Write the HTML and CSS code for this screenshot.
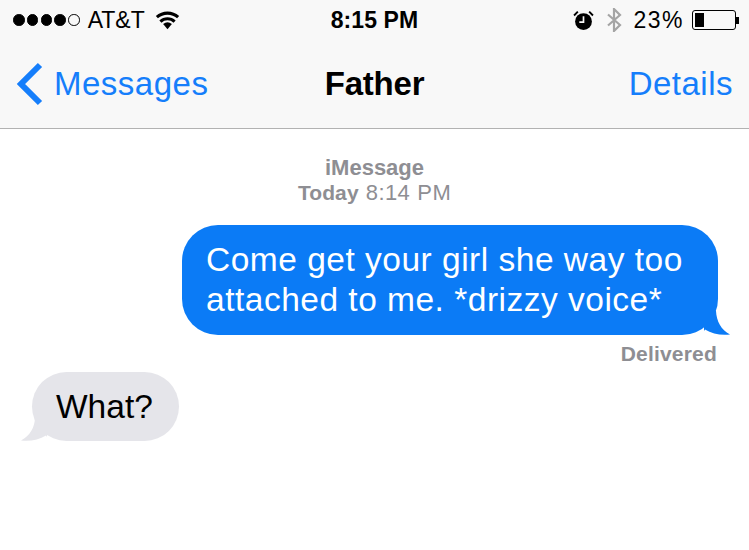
FILE: index.html
```html
<!DOCTYPE html>
<html lang="en">
<head>
<meta charset="utf-8">
<title>Messages</title>
<link rel="stylesheet" href="styles.css">
</head>
<body>
<header class="top">
  <div class="status">
    <div class="status-left">
      <span class="signal"><i class="dot"></i><i class="dot"></i><i class="dot"></i><i class="dot"></i><i class="dot empty"></i></span>
      <span class="carrier">AT&amp;T</span>
      <svg class="wifi" width="25" height="19" viewBox="0 0 24 18"><path d="M12 17.500 7.800 12.400a6.500 6.500 0 0 1 8.400 0Z" fill="#000"/><path d="M5.200 10a10 10 0 0 1 13.600 0M1.800 5.800a15.200 15.200 0 0 1 20.400 0" fill="none" stroke="#000" stroke-width="3"/></svg>
    </div>
    <div class="clock">8:15 PM</div>
    <div class="status-right">
      <svg class="alarm" width="21" height="21" viewBox="0 0 20 20"><circle cx="10" cy="11" r="8" fill="#000"/><path d="M10 6v5.500H6" fill="none" stroke="#f8f8f8" stroke-width="1.600"/><path d="M1 5.200 4.600 1.600M19 5.200l-3.600-3.600" stroke="#000" stroke-width="1.800" fill="none"/></svg>
      <svg class="bt" width="16" height="24" viewBox="0 0 16 24"><path d="M2 6.500 14 17l-6 6V1l6 6L2 17.500" fill="none" stroke="#a4a4a4" stroke-width="2.200"/></svg>
      <span class="pct">23%</span>
      <span class="battery"><span class="battery-fill"></span></span><span class="battery-tip"></span>
    </div>
  </div>
  <nav class="nav">
    <a class="back">
      <svg width="28" height="44" viewBox="0 0 28 44"><path d="M25 3 6 22l19 19" fill="none" stroke="#157efb" stroke-width="6"/></svg>
      <span>Messages</span>
    </a>
    <h1 class="title">Father</h1>
    <a class="details">Details</a>
  </nav>
</header>
<main class="thread">
  <div class="stamp">
    <div class="stamp-service">iMessage</div>
    <div><b class="stamp-day">Today</b> 8:14 PM</div>
  </div>
  <div class="bubble-row out">
    <div class="bubble blue">Come get your girl she way too<br>attached to me. *drizzy voice*
      <svg class="tail tail-out" width="26" height="24" viewBox="0 0 26 24"><path d="M0 0H12C12.500 10 17 19 26 23.500 17 24.500 8 23 1 18.500L0 20Z" fill="#0b7bf6"/></svg>
    </div>
  </div>
  <div class="delivered">Delivered</div>
  <div class="bubble-row in">
    <div class="bubble grey">What?
      <svg class="tail tail-in" width="26" height="24" viewBox="0 0 26 24"><path d="M26 0H14C14 10 9 19 0 23.500 9 24.500 18 23 25 18.500L26 20Z" fill="#e5e5ea"/></svg>
    </div>
  </div>
</main>
</body>
</html>
```
FILE: styles.css
```css
* { box-sizing: border-box; }
html, body { margin: 0; height: 100%; }
body {
  width: 749px;
  height: 550px;
  overflow: hidden;
  background: #fff;
  font-family: "Liberation Sans", Arial, sans-serif;
  color: #000;
}
.top {
  height: 129px;
  background: #f8f8f8;
  border-bottom: 1px solid #b2b2b2;
}
.status {
  height: 40px;
  display: grid;
  grid-template-columns: 1fr auto 1fr;
  align-items: center;
  padding: 0 10px 0 13px;
  font-size: 23px;
}
.status-left { display: flex; align-items: center; }
.signal { display: flex; gap: 2.300px; margin-right: 8px; }
.dot { width: 11.500px; height: 11.500px; border-radius: 50%; background: #000; border: 1px solid #000; }
.dot.empty { background: transparent; }
.carrier { margin-right: 10px; }
.clock { font-weight: 700; font-size: 23px; letter-spacing: 0.100px; margin-right: 3px; }
.status-right { display: flex; align-items: center; justify-content: flex-end; }
.alarm { margin-right: 12px; }
.bt { margin-right: 11px; }
.pct { margin-right: 8px; letter-spacing: 1.500px; }
.battery {
  width: 44px; height: 20px; padding: 2px;
  border: 1px solid #000; border-radius: 3px;
  display: block;
}
.battery-fill { display: block; width: 9px; height: 100%; background: #000; }
.battery-tip { width: 3px; height: 7px; background: #000; }
.nav {
  height: 88px;
  display: grid;
  grid-template-columns: 1fr auto 1fr;
  align-items: center;
  padding: 0 16px 0 15px;
  font-size: 33px;
  letter-spacing: 0.500px;
  color: #157efb;
}
.back { display: flex; align-items: center; gap: 11px; }
.title { margin: 0 0 0 1px; font-size: 33px; font-weight: 700; letter-spacing: -0.200px; color: #000; }
.details { justify-self: end; }
.thread { display: flex; flex-direction: column; padding-top: 26px; }
.stamp {
  text-align: center;
  font-size: 22px;
  line-height: 25px;
  letter-spacing: 0.400px;
  word-spacing: 0.600px;
  color: #8e8e93;
}
.stamp-service { font-weight: 700; letter-spacing: 0; }
.stamp-day { font-size: 21px; letter-spacing: 0.100px; }
.bubble-row { display: flex; }
.bubble-row.out { justify-content: flex-end; padding: 20px 31px 0 0; }
.bubble-row.in { padding: 5px 0 0 32px; }
.bubble { position: relative; font-size: 33.500px; line-height: 40px; border-radius: 36px; }
.blue { background: #0b7bf6; color: #fff; width: 536px; height: 110px; padding: 15px 24px; letter-spacing: 0.500px; }
.grey { background: #e5e5ea; color: #000; width: 147px; height: 69px; padding: 15px 24px; }
.tail { position: absolute; bottom: 0; }
.tail-out { right: -12px; }
.tail-in { left: -11px; }
.delivered {
  text-align: right;
  padding: 6px 32px 0 0;
  font-size: 21px;
  line-height: 26px;
  font-weight: 700;
  letter-spacing: 0.200px;
  color: #8e8e93;
}
```
